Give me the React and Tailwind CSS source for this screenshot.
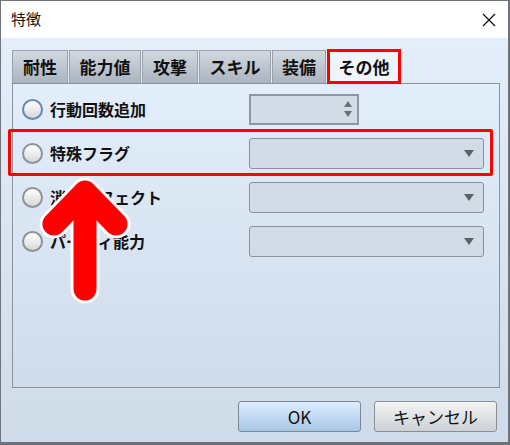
import React from 'react';

const JP = { fontFamily: '"Noto Sans CJK JP", "Noto Sans", sans-serif' };

const TABS = [
  { label: '耐性', w: 'w-[56px]' },
  { label: '能力値', w: 'w-[72px]' },
  { label: '攻撃', w: 'w-[56px]' },
  { label: 'スキル', w: 'w-[72px]' },
  { label: '装備', w: 'w-[54px]' },
];

function Radio({ focused }) {
  return (
    <span
      className={`w-[21px] h-[21px] rounded-full border-2 shrink-0 bg-gradient-to-b from-white to-[#d8d8d8] ${
        focused ? 'border-[#6288b3]' : 'border-[#8e9297]'
      }`}
    />
  );
}

function Combo() {
  return (
    <div className="w-[235px] h-[31px] rounded-[3px] border border-[#8c9198] bg-[#d2dce6] flex items-center justify-end pr-[8px]">
      <svg width="12" height="9" viewBox="0 0 12 9">
        <path d="M1 1 L11 1 L6 8 Z" fill="#5d6268" />
      </svg>
    </div>
  );
}

function Row({ label, focused, children }) {
  return (
    <div className="h-[44px] flex items-center">
      <div className="w-[236px] flex items-center gap-[7px] pl-[9px]">
        <Radio focused={focused} />
        <span className="text-[16px] font-semibold text-[#111]">{label}</span>
      </div>
      {children}
    </div>
  );
}

export default function App() {
  return (
    <div className="w-[510px] h-[445px] bg-[#6b7077] overflow-hidden relative" style={JP}>
      <div className="w-[509px] h-[443px] border border-[#70757c] flex flex-col bg-gradient-to-b from-[#e5f0fc] to-[#cfdbe8]">
        {/* Title bar */}
        <div className="h-[37px] bg-white flex items-center justify-between pl-[10px] pr-[12px] shrink-0">
          <span className="text-[15px] text-[#111]">特徴</span>
          <svg width="14" height="14" viewBox="0 0 14 14">
            <path d="M1 1 L13 13 M13 1 L1 13" stroke="#111" strokeWidth="1.3" />
          </svg>
        </div>

        <div className="flex flex-col px-[11px] pt-[11px]">
          {/* Tabs */}
          <div className="flex items-end h-[34px] gap-[1px]">
            {TABS.map((t) => (
              <div
                key={t.label}
                className={`${t.w} h-[33px] border border-b-0 border-[#9aa1aa] bg-gradient-to-b from-[#d3d9e0] to-[#aab3bf] flex items-center justify-center text-[17px] font-semibold text-[#111]`}
              >
                {t.label}
              </div>
            ))}
            <div className="w-[74px] h-[35px] border-[3px] border-[#ff0000] bg-[#eef5fd] flex items-center justify-center text-[17px] font-semibold text-[#111] mb-[-1px] relative z-10">
              その他
            </div>
          </div>

          {/* Panel */}
          <div className="w-[488px] h-[305px] border border-[#8a929c] bg-gradient-to-b from-[#e3eefb] to-[#d0dcea] pt-[3px]">
            <div className="flex flex-col">
              <Row label="行動回数追加" focused>
                <div className="w-[110px] h-[31px] border-2 border-[#8f959c] bg-[#d2dce6] flex flex-col items-end justify-center pr-[4px] gap-[2px]">
                  <svg width="10" height="8" viewBox="0 0 10 8">
                    <path d="M1 7 L9 7 L5 1 Z" fill="#6a6f75" />
                  </svg>
                  <svg width="10" height="8" viewBox="0 0 10 8">
                    <path d="M1 1 L9 1 L5 7 Z" fill="#6a6f75" />
                  </svg>
                </div>
              </Row>
              <Row label="特殊フラグ">
                <Combo />
              </Row>
              <Row label="消滅エフェクト">
                <Combo />
              </Row>
              <Row label="パーティ能力">
                <Combo />
              </Row>
            </div>
          </div>

          {/* Buttons */}
          <div className="flex justify-end gap-[13px] pt-[13px]">
            <button className="w-[123px] h-[31px] rounded-[3px] border border-[#7b8794] bg-gradient-to-b from-[#deedfd] to-[#a6c6e6] text-[17px] text-[#111]">
              OK
            </button>
            <button className="w-[123px] h-[31px] rounded-[3px] border border-[#8a8f96] bg-gradient-to-b from-[#f4f4f4] to-[#cdd1d6] text-[17px] text-[#111]">
              キャンセル
            </button>
          </div>
        </div>
      </div>

      {/* Annotation: highlight box */}
      <div className="absolute left-[8px] top-[129px] w-[485px] h-[47px] border-[3px] border-[#ff0000] rounded-[2px] pointer-events-none" />

      {/* Annotation: arrow */}
      <svg className="absolute left-0 top-0 pointer-events-none" width="510" height="445">
        <g fill="none" strokeLinecap="round" strokeLinejoin="round">
          <path d="M85 289 L85 197 M54 224 L85 192 L116 224" stroke="#fff" strokeWidth="29" />
          <path d="M85 289 L85 197 M54 224 L85 192 L116 224" stroke="#ff0000" strokeWidth="23" />
        </g>
      </svg>
    </div>
  );
}
